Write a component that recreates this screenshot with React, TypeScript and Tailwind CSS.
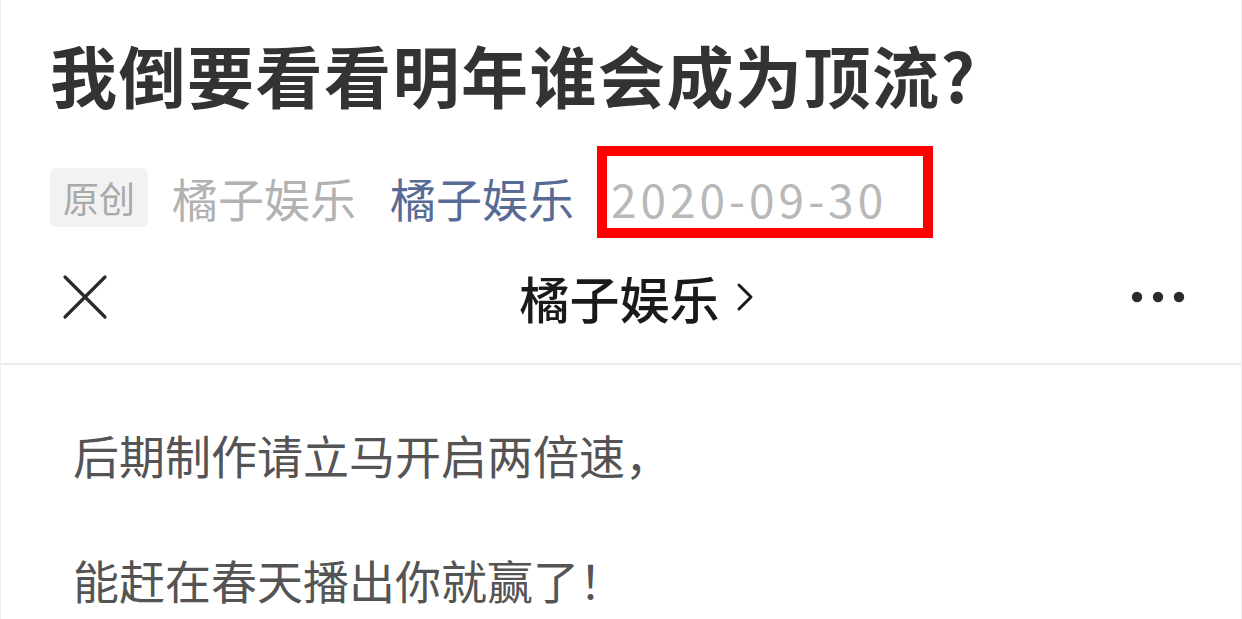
const CJK = "font-['Noto_Sans_CJK_SC','Noto_Sans',sans-serif]";

function CloseIcon() {
  return (
    <svg width="46" height="46" viewBox="0 0 46 46" fill="none">
      <path d="M3 3 L43 43 M43 3 L3 43" stroke="#2b2b2b" strokeWidth="3.2" strokeLinecap="round" />
    </svg>
  );
}

function MoreIcon() {
  return (
    <svg width="54" height="12" viewBox="0 0 54 12" fill="#2b2b2b">
      <circle cx="6" cy="6" r="5.2" />
      <circle cx="27" cy="6" r="5.2" />
      <circle cx="48" cy="6" r="5.2" />
    </svg>
  );
}

function Chevron() {
  return (
    <svg width="18" height="30" viewBox="0 0 18 30" fill="none">
      <path d="M3 3 L15 15 L3 27" stroke="#1a1a1a" strokeWidth="3" strokeLinecap="round" strokeLinejoin="round" />
    </svg>
  );
}

export default function App() {
  return (
    <div className={`w-[1242px] h-[619px] overflow-hidden bg-white border-x border-[#eeeeee] ${CJK}`}>
      <div className="pl-[49px] pt-[34px]">
        <h1 className="text-[67px] leading-[80px] font-semibold text-[#333333] tracking-[1.5px]">
          我倒要看看明年谁会成为顶流?
        </h1>
        <div className="mt-[53px] h-[60px] flex items-center">
          <span className="h-[59px] w-[98px] rounded-[6px] bg-[#f2f2f2] text-[#a9a9a9] text-[36px] flex items-center justify-center">
            原创
          </span>
          <span className="ml-[24px] text-[46px] text-[#b2b2b2]">橘子娱乐</span>
          <span className="ml-[34px] text-[46px] text-[#576b95]">橘子娱乐</span>
          <span className="ml-[23px] self-start -mt-[21px] h-[92px] border-[10px] border-[#ff0000] pl-[4px] pr-[36px] pt-[12px] flex items-center text-[46px] text-[#b8b8b8] tracking-[4px]">
            2020-09-30
          </span>
        </div>
      </div>
      <div className="mt-[3px] h-[135px] border-b-2 border-[#ececec] flex items-center justify-between pl-[61px] pr-[56px]">
        <CloseIcon />
        <div className="relative text-[50px] font-medium text-[#1a1a1a] leading-none">
          橘子娱乐
          <span className="absolute left-full top-1/2 -translate-y-1/2 ml-[16px] flex">
            <Chevron />
          </span>
        </div>
        <MoreIcon />
      </div>
      <div className="pl-[72px] pt-[52px] flex flex-col gap-[51px] text-[46px] leading-[74px] text-[#545454]">
        <p>后期制作请立马开启两倍速，</p>
        <p>能赶在春天播出你就赢了！</p>
      </div>
    </div>
  );
}
